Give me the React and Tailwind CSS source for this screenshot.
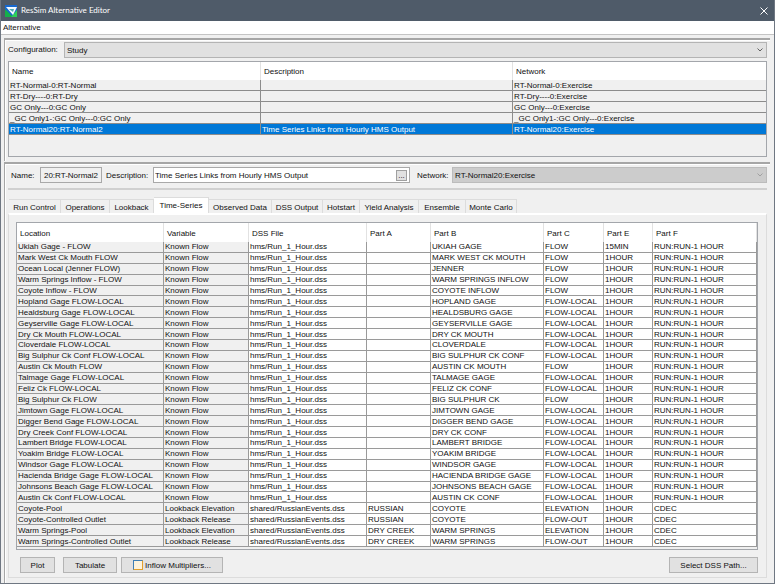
import { useState } from 'react';
import clsx from 'clsx';

const alternatives = [
  { name: 'RT-Normal-0:RT-Normal', description: '', network: 'RT-Normal-0:Exercise' },
  { name: 'RT-Dry----0:RT-Dry', description: '', network: 'RT-Dry----0:Exercise' },
  { name: 'GC Only---0:GC Only', description: '', network: 'GC Only---0:Exercise' },
  { name: '_GC Only1-:GC Only---0:GC Only', description: '', network: '_GC Only1-:GC Only---0:Exercise' },
  {
    name: 'RT-Normal20:RT-Normal2',
    description: 'Time Series Links from Hourly HMS Output',
    network: 'RT-Normal20:Exercise',
  },
];

const tabs = [
  'Run Control',
  'Operations',
  'Lookback',
  'Time-Series',
  'Observed Data',
  'DSS Output',
  'Hotstart',
  'Yield Analysis',
  'Ensemble',
  'Monte Carlo',
];

// location, part B, part C, part E
const inflows = [
  ['Ukiah Gage - FLOW', 'UKIAH GAGE', 'FLOW', '15MIN'],
  ['Mark West Ck Mouth FLOW', 'MARK WEST CK MOUTH', 'FLOW', '1HOUR'],
  ['Ocean Local (Jenner FLOW)', 'JENNER', 'FLOW', '1HOUR'],
  ['Warm Springs Inflow - FLOW', 'WARM SPRINGS INFLOW', 'FLOW', '1HOUR'],
  ['Coyote Inflow - FLOW', 'COYOTE INFLOW', 'FLOW', '1HOUR'],
  ['Hopland Gage FLOW-LOCAL', 'HOPLAND GAGE', 'FLOW-LOCAL', '1HOUR'],
  ['Healdsburg Gage FLOW-LOCAL', 'HEALDSBURG GAGE', 'FLOW-LOCAL', '1HOUR'],
  ['Geyserville Gage FLOW-LOCAL', 'GEYSERVILLE GAGE', 'FLOW-LOCAL', '1HOUR'],
  ['Dry Ck Mouth FLOW-LOCAL', 'DRY CK MOUTH', 'FLOW-LOCAL', '1HOUR'],
  ['Cloverdale FLOW-LOCAL', 'CLOVERDALE', 'FLOW-LOCAL', '1HOUR'],
  ['Big Sulphur Ck Conf FLOW-LOCAL', 'BIG SULPHUR CK CONF', 'FLOW-LOCAL', '1HOUR'],
  ['Austin Ck Mouth FLOW', 'AUSTIN CK MOUTH', 'FLOW', '1HOUR'],
  ['Talmage Gage FLOW-LOCAL', 'TALMAGE GAGE', 'FLOW-LOCAL', '1HOUR'],
  ['Feliz Ck FLOW-LOCAL', 'FELIZ CK CONF', 'FLOW-LOCAL', '1HOUR'],
  ['Big Sulphur Ck FLOW', 'BIG SULPHUR CK', 'FLOW', '1HOUR'],
  ['Jimtown Gage FLOW-LOCAL', 'JIMTOWN GAGE', 'FLOW-LOCAL', '1HOUR'],
  ['Digger Bend Gage FLOW-LOCAL', 'DIGGER BEND GAGE', 'FLOW-LOCAL', '1HOUR'],
  ['Dry Creek Conf FLOW-LOCAL', 'DRY CK CONF', 'FLOW-LOCAL', '1HOUR'],
  ['Lambert Bridge FLOW-LOCAL', 'LAMBERT BRIDGE', 'FLOW-LOCAL', '1HOUR'],
  ['Yoakim Bridge FLOW-LOCAL', 'YOAKIM BRIDGE', 'FLOW-LOCAL', '1HOUR'],
  ['Windsor Gage FLOW-LOCAL', 'WINDSOR GAGE', 'FLOW-LOCAL', '1HOUR'],
  ['Hacienda Bridge Gage FLOW-LOCAL', 'HACIENDA BRIDGE GAGE', 'FLOW-LOCAL', '1HOUR'],
  ['Johnsons Beach Gage FLOW-LOCAL', 'JOHNSONS BEACH GAGE', 'FLOW-LOCAL', '1HOUR'],
  ['Austin Ck Conf FLOW-LOCAL', 'AUSTIN CK CONF', 'FLOW-LOCAL', '1HOUR'],
];

const seriesHeaders = ['Location', 'Variable', 'DSS File', 'Part A', 'Part B', 'Part C', 'Part E', 'Part F'];

const seriesRows = [
  ...inflows.map(([location, partB, partC, partE]) => [
    location, 'Known Flow', 'hms/Run_1_Hour.dss', '', partB, partC, partE, 'RUN:RUN-1 HOUR',
  ]),
  ['Coyote-Pool', 'Lookback Elevation', 'shared/RussianEvents.dss', 'RUSSIAN', 'COYOTE', 'ELEVATION', '1HOUR', 'CDEC'],
  ['Coyote-Controlled Outlet', 'Lookback Release', 'shared/RussianEvents.dss', 'RUSSIAN', 'COYOTE', 'FLOW-OUT', '1HOUR', 'CDEC'],
  ['Warm Springs-Pool', 'Lookback Elevation', 'shared/RussianEvents.dss', 'DRY CREEK', 'WARM SPRINGS', 'ELEVATION', '1HOUR', 'CDEC'],
  ['Warm Springs-Controlled Outlet', 'Lookback Release', 'shared/RussianEvents.dss', 'DRY CREEK', 'WARM SPRINGS', 'FLOW-OUT', '1HOUR', 'CDEC'],
];

const AppLogo = () => (
  <svg viewBox="0 0 12 12" className="size-3" aria-hidden="true">
    <rect width="12" height="12" fill="#1668d0" />
    <path d="M0 4 L8 12 H0 Z" fill="#14b04a" />
    <path d="M12 5 V12 H6 Z" fill="#2cd05a" />
    <path d="M1 2 H12 L8 10 Z" fill="#f4fbff" />
    <path d="M4 4 H9 L8 7 Z" fill="#4fa9b4" />
  </svg>
);

const Chevron = ({ className }) => (
  <svg viewBox="0 0 6 4" className={clsx('pointer-events-none absolute right-1 top-1.5 h-1 w-1.5', className)} aria-hidden="true">
    <path d="M0.5 0.5 L3 3 L5.5 0.5" fill="none" stroke="currentColor" />
  </svg>
);

const PushButton = ({ className, children }) => (
  <button
    type="button"
    className={clsx('flex h-4 items-center justify-center border border-[#b4b4b4] bg-[#e1e1e1]', className)}
  >
    {children}
  </button>
);

const AlternativesTable = () => {
  const [selected, setSelected] = useState(4);

  return (
    <div className="h-24 border border-[#a3a6ab] bg-[#f0f0f0]">
      <table className="h-[73px] w-full table-fixed border-separate border-spacing-0 text-left">
        <colgroup>
          <col className="w-[252px]" />
          <col className="w-[252px]" />
          <col />
        </colgroup>
        <thead>
          <tr className="h-[18px] bg-white">
            <th className="border-r border-[#e2e2e2] pt-px pl-[3px] font-normal">Name</th>
            <th className="border-r border-[#e2e2e2] pt-px pl-[3px] font-normal">Description</th>
            <th className="pt-px pl-[3px] font-normal">Network</th>
          </tr>
        </thead>
        <tbody>
          {alternatives.map((alt, i) => (
            <tr
              key={alt.name}
              onClick={() => setSelected(i)}
              className={clsx('whitespace-nowrap', i === selected && 'bg-[#0078d7] text-white')}
            >
              <td className="border-r border-b border-[#8c8c8c] pl-px">{alt.name}</td>
              <td className="border-r border-b border-[#8c8c8c] pl-px">{alt.description}</td>
              <td className="border-b border-[#8c8c8c] pl-px">{alt.network}</td>
            </tr>
          ))}
        </tbody>
      </table>
    </div>
  );
};

const TimeSeriesTable = () => (
  <div className="border border-[#a3a6ab] bg-[#f0f0f0] pb-0.5">
    <table className="h-[324px] w-full table-fixed border-separate border-spacing-0 text-left">
      <colgroup>
        <col className="w-[147px]" />
        <col className="w-[85px]" />
        <col className="w-[118px]" />
        <col className="w-[64px]" />
        <col className="w-[113px]" />
        <col className="w-[60px]" />
        <col className="w-[49px]" />
        <col />
      </colgroup>
      <thead>
        <tr className="h-[19px] bg-white">
          {seriesHeaders.map((header) => (
            <th key={header} className="border-r border-[#e2e2e2] pt-px pl-[3px] font-normal">{header}</th>
          ))}
        </tr>
      </thead>
      <tbody>
        {seriesRows.map((row) => (
          <tr key={row[0]} className="whitespace-nowrap">
            {row.map((cell, i) => (
              <td
                key={seriesHeaders[i]}
                className={clsx('border-r border-b border-[#9a9a9a] pl-px', i > 1 && 'bg-white')}
              >
                {cell}
              </td>
            ))}
          </tr>
        ))}
      </tbody>
    </table>
  </div>
);

const App = () => {
  const [activeTab, setActiveTab] = useState('Time-Series');

  return (
    <div className="min-h-screen bg-white pr-1 font-['Liberation_Sans',Arial,sans-serif] text-[8px] leading-[9px] text-[#101010]">
      <div className="flex min-h-screen flex-col border-x border-b border-[#6f7782] bg-[#f0f0f0]">
        <header className="flex h-[21px] items-center bg-[#4f5b69] px-1 text-white">
          <AppLogo />
          <h1 className="ml-1 flex-1 font-[Lato,sans-serif]">ResSim Alternative Editor</h1>
          <button type="button" aria-label="Close" className="p-0.5">
            <svg viewBox="0 0 8 8" className="size-2" aria-hidden="true">
              <path d="M0.5 0.5 L7.5 7.5 M7.5 0.5 L0.5 7.5" stroke="#fff" fill="none" />
            </svg>
          </button>
        </header>

        <nav className="flex h-3.5 items-center border-b border-[#c4c4c4] bg-white px-0.5">
          <button type="button">Alternative</button>
        </nav>

        <main className="flex flex-1 flex-col gap-px pt-[3px] pl-[3px] pr-1">
          <section className="border-t-2 border-l border-[#a6a6a6] pt-0.5 pr-[3px] pb-1 pl-[3px] shadow-[inset_1px_1px_0_#fff]">
            <div className="mb-[3px] flex">
              <label htmlFor="configuration" className="w-14 pt-[3px]">Configuration:</label>
              <div className="relative flex-1">
                <select
                  id="configuration"
                  className="block h-4 w-full appearance-none border border-[#b4b4b4] bg-[#e1e1e1] px-0.5"
                >
                  <option>Study</option>
                </select>
                <Chevron className="text-[#606060]" />
              </div>
            </div>
            <AlternativesTable />
          </section>

          <section className="flex-1 border-t-2 border-l border-[#a6a6a6] pt-[3px] pr-[3px] pb-1 pl-[3px] shadow-[inset_1px_1px_0_#fff]">
            <div className="flex items-center border-b-2 border-[#d0d0d0] pb-[5px]">
              <label htmlFor="name" className="w-8 pl-[3px]">Name:</label>
              <input
                id="name"
                readOnly
                defaultValue="20:RT-Normal2"
                className="h-4 w-[62px] border border-[#a9a9a9] bg-[#f0f0f0] px-px text-center"
              />
              <label htmlFor="description" className="w-[51px] pl-1">Description:</label>
              <div className="flex h-4 w-[257px] items-center border border-[#a9a9a9] bg-white pr-0.5">
                <input
                  id="description"
                  defaultValue="Time Series Links from Hourly HMS Output"
                  className="min-w-0 flex-1 px-px"
                />
                <button
                  type="button"
                  aria-label="Edit description"
                  className="flex h-[11px] w-[11px] items-center justify-center border border-[#a0a0a0] bg-[#e1e1e1]"
                >
                  ...
                </button>
              </div>
              <label htmlFor="network" className="w-[42px] pl-[7px]">Network:</label>
              <div className="relative flex-1">
                <select
                  id="network"
                  disabled
                  className="block h-4 w-full appearance-none border border-[#bcbcbc] bg-[#cccccc] px-0.5 opacity-100"
                >
                  <option>RT-Normal20:Exercise</option>
                </select>
                <Chevron className="text-[#a0a0a0]" />
              </div>
            </div>

            <div
              role="tablist"
              className="mt-[7px] grid grid-cols-[52px_49px_44px_55px_63px_51px_37px_59px_47px_51px] items-end pl-px"
            >
              {tabs.map((tab) => (
                <button
                  key={tab}
                  type="button"
                  role="tab"
                  aria-selected={tab === activeTab}
                  onClick={() => setActiveTab(tab)}
                  className={clsx(
                    'border-t border-r border-[#dcdcdc] whitespace-nowrap',
                    tab === activeTab ? 'h-4 bg-white' : 'h-3.5 pt-0.5',
                  )}
                >
                  {tab}
                </button>
              ))}
            </div>

            <div role="tabpanel" className="border border-t-2 border-[#dcdcdc] border-t-white pt-[7px] pr-2 pb-1 pl-[7px]">
              <TimeSeriesTable />
              <div className="mt-[7px] flex pl-1">
                <PushButton className="w-[35px]">Plot</PushButton>
                <PushButton className="ml-2 w-[54px]">Tabulate</PushButton>
                <PushButton className="ml-1 w-[102px] gap-0.5">
                  <span className="size-2.5 border border-t-[#3f7fb5] border-l-[#3f7fb5] border-r-[#e2a02c] border-b-[#e2a02c] bg-[#fdf3dc]" />
                  Inflow Multipliers...
                </PushButton>
                <PushButton className="ml-auto w-[89px]">Select DSS Path...</PushButton>
              </div>
            </div>
          </section>
        </main>
      </div>
    </div>
  );
};

export default App;
